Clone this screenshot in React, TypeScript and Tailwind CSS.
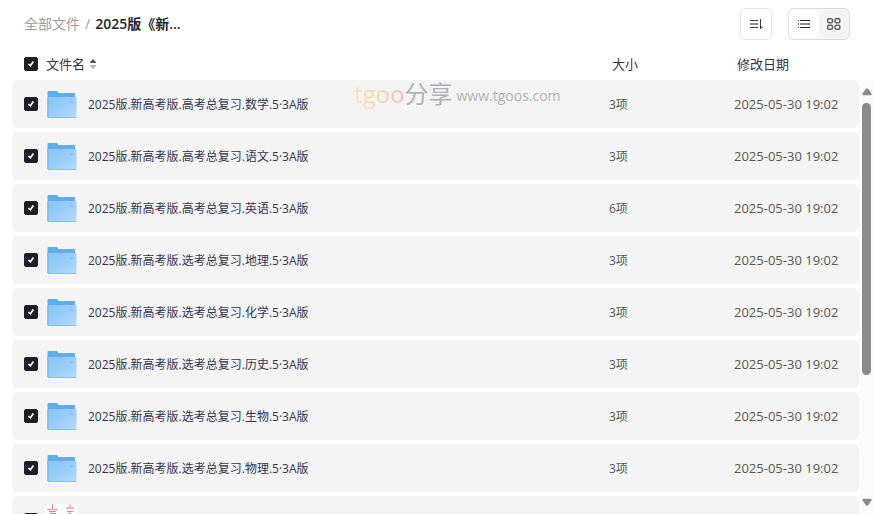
import { useState } from 'react';

const files = [
  { name: '2025版.新高考版.高考总复习.数学.5·3A版', size: '3项', date: '2025-05-30 19:02' },
  { name: '2025版.新高考版.高考总复习.语文.5·3A版', size: '3项', date: '2025-05-30 19:02' },
  { name: '2025版.新高考版.高考总复习.英语.5·3A版', size: '6项', date: '2025-05-30 19:02' },
  { name: '2025版.新高考版.选考总复习.地理.5·3A版', size: '3项', date: '2025-05-30 19:02' },
  { name: '2025版.新高考版.选考总复习.化学.5·3A版', size: '3项', date: '2025-05-30 19:02' },
  { name: '2025版.新高考版.选考总复习.历史.5·3A版', size: '3项', date: '2025-05-30 19:02' },
  { name: '2025版.新高考版.选考总复习.生物.5·3A版', size: '3项', date: '2025-05-30 19:02' },
  { name: '2025版.新高考版.选考总复习.物理.5·3A版', size: '3项', date: '2025-05-30 19:02' },
];

function Checkbox({ label, checked, onChange }: { label: string; checked: boolean; onChange: () => void }) {
  return (
    <label className="grid w-3.5 shrink-0 cursor-pointer">
      <input
        type="checkbox"
        aria-label={label}
        checked={checked}
        onChange={onChange}
        className="peer col-start-1 row-start-1 size-3.5 appearance-none rounded-xs border border-gray-400 bg-white checked:border-[#1e1f26] checked:bg-[#1e1f26]"
      />
      <svg viewBox="0 0 14 14" className="pointer-events-none invisible col-start-1 row-start-1 size-3.5 peer-checked:visible" fill="none" stroke="#fff" strokeWidth="1.7">
        <path d="M4.500 7 6.400 8.800 9.400 4.600" />
      </svg>
    </label>
  );
}

function FolderIcon() {
  return (
    <svg viewBox="0 0 32 32" className="size-8 shrink-0">
      <defs>
        <linearGradient id="folder" x1="0" y1="0" x2="1" y2="1">
          <stop offset="0" stopColor="#86c3f6" />
          <stop offset=".5" stopColor="#9bcef9" />
          <stop offset="1" stopColor="#b4dcfc" />
        </linearGradient>
      </defs>
      <path d="M1.500 4.200Q1.500 3 2.700 3H10.300Q11 3 11.500 3.600L12.600 4.900H28Q29 4.900 29 6V29H1.500Z" fill="#5fade9" />
      <path d="M2 9H29.800Q30.500 9 30.500 9.700V29Q30.500 30 29.500 30H2.500Q1.500 30 1.500 29V9.500Q1.500 9 2 9Z" fill="url(#folder)" />
      <path d="M23.500 14h3.500" stroke="#7dbbf0" strokeWidth="1.500" />
      <path d="M2 29.500h28" stroke="#7cbff5" strokeWidth="1" />
      <path d="M2 9v20" stroke="#74b8f0" strokeWidth="1" />
    </svg>
  );
}

export default function App() {
  const [selected, setSelected] = useState<boolean[]>(Array(files.length + 1).fill(true));
  const [view, setView] = useState<'list' | 'grid'>('list');

  const allSelected = selected.every(Boolean);
  const toggle = (index: number) => setSelected(s => s.map((v, i) => (i === index ? !v : v)));
  const toggleAll = () => setSelected(s => s.map(() => !allSelected));

  return (
    <div className="relative flex h-screen flex-col overflow-hidden bg-white font-['Open_Sans','Noto_Sans_CJK_SC',sans-serif] text-[#33334f]">
      {/* Toolbar */}
      <header className="flex h-12 shrink-0 items-center justify-between px-6">
        <nav className="flex items-center gap-[5px] text-sm">
          <a href="#all" className="text-[#9b9ca3]">全部文件</a>
          <span className="text-[#9b9ca3]">/</span>
          <span className="font-semibold text-[#25262e]">2025版《新...</span>
        </nav>
        <div className="flex gap-4">
          <button aria-label="排序" className="flex size-8 items-center justify-center rounded-md border border-[#e6e6e8]">
            <svg viewBox="0 0 16 16" className="size-4" fill="none" stroke="#3a3b40">
              <path d="M2 4.500h8M2 11.500h8M12.500 3v10" />
              <path d="M2 8h8" stroke="#8d8d90" strokeWidth="2" />
              <path d="M12 13v-3l3 1z" fill="#3a3b40" stroke="none" />
            </svg>
          </button>
          <div className="flex h-8 overflow-hidden rounded-md border border-[#dcdcde] bg-[#f4f4f4]">
            <button aria-label="列表" onClick={() => setView('list')} className={`flex w-[30px] items-center justify-center rounded-md ${view === 'list' ? 'bg-white' : ''}`}>
              <svg viewBox="0 0 16 16" className="size-4" stroke="#1e1f26">
                <path d="M4 4.500h10M4 11.500h10M2 4.500h1M2 11.500h1" />
                <path d="M4 8h10M2 8h1" stroke="#8d8d90" strokeWidth="2" />
              </svg>
            </button>
            <button aria-label="网格" onClick={() => setView('grid')} className={`flex w-[30px] items-center justify-center rounded-md ${view === 'grid' ? 'bg-white' : ''}`}>
              <svg viewBox="0 0 16 16" className="size-4" fill="none" stroke="#626266" strokeWidth="1.500">
                <rect x="1.700" y="2.700" width="4.800" height="4" rx="1.200" />
                <rect x="9" y="2.700" width="4.800" height="4" rx="1.200" />
                <rect x="1.700" y="9.200" width="4.800" height="4" rx="1.200" />
                <rect x="9" y="9.200" width="4.800" height="4" rx="1.200" />
              </svg>
            </button>
          </div>
        </div>
      </header>

      <main className="flex min-h-0 flex-1">
        {/* File list */}
        <div className="min-w-0 flex-1 overflow-hidden pl-3">
          <table className="w-full table-fixed border-separate border-spacing-x-0 border-spacing-y-1 text-left">
            <colgroup>
              <col />
              <col className="w-[125px]" />
              <col className="w-[125px]" />
            </colgroup>
            <thead>
              <tr className="h-6 text-[13px] leading-5">
                <th className="p-0 pl-3 font-normal">
                  <div className="flex items-center gap-2">
                    <Checkbox label="全选" checked={allSelected} onChange={toggleAll} />
                    <button className="flex items-center gap-1">
                      文件名
                      <svg viewBox="0 0 8 12" className="h-3 w-2">
                        <path d="M1 5Q.8 4.500 1.200 4L3 1.800Q4 .8 5 1.800L6.800 4Q7.200 4.500 7 5Z" fill="#55565c" />
                        <path d="M1 7Q.8 7.500 1.200 8L3 10.200Q4 11.200 5 10.200L6.800 8Q7.200 7.500 7 7Z" fill="#b5b5b8" />
                      </svg>
                    </button>
                  </div>
                </th>
                <th className="p-0 pl-[3px] font-normal">大小</th>
                <th className="p-0 pl-[3px] font-normal">修改日期</th>
              </tr>
            </thead>
            <tbody>
              {files.map((file, i) => (
                <tr key={file.name} className="h-12">
                  <td className="rounded-l-md bg-[#f4f4f4] p-0 pl-3">
                    <div className="flex items-center gap-2">
                      <Checkbox label={file.name} checked={selected[i]} onChange={() => toggle(i)} />
                      <FolderIcon />
                      <span className="truncate pt-0.5 pl-0.5 text-xs">{file.name}</span>
                    </div>
                  </td>
                  <td className="bg-[#f4f4f4] p-0 pt-0.5 text-xs text-[#5a5550]">{file.size}</td>
                  <td className="rounded-r-md bg-[#f4f4f4] p-0 pt-0.5 text-[13px] whitespace-nowrap text-[#5a5550]">{file.date}</td>
                </tr>
              ))}
              <tr className="h-12">
                <td className="rounded-l-md bg-[#f4f4f4] p-0 pl-3">
                  <div className="flex items-center gap-2">
                    <Checkbox label="图片" checked={selected[files.length]} onChange={() => toggle(files.length)} />
                    <svg viewBox="0 0 32 32" className="size-8 shrink-0">
                      <rect width="32" height="32" fill="#fff" />
                      <g fill="none" stroke="#d88986">
                        <path d="M6.500 0v5M3 7.500h7M4 9.500h6M24 0v3M21 7.500h6M22 9.500h3" />
                        <path d="M1 5.500h11M20 4h8" strokeWidth="1.500" stroke="#e3a5a2" />
                      </g>
                    </svg>
                  </div>
                </td>
                <td className="bg-[#f4f4f4] p-0" />
                <td className="rounded-r-md bg-[#f4f4f4] p-0" />
              </tr>
            </tbody>
          </table>
        </div>

        {/* Scroll rail */}
        <div className="mt-8 flex w-[15px] shrink-0 flex-col items-center gap-[7px] bg-[#fcfcfc] py-2">
          <svg viewBox="0 0 10 8" className="h-2 w-2.5 shrink-0" fill="#8b8b8b">
            <path d="M3.800 .8Q5 -.2 6.200 .8L9.500 5.500Q10 7.200 8.800 7.200H1.200Q0 7.200 .5 5.500Z" />
          </svg>
          <div className="min-h-0 w-full flex-1">
            <div className="mx-auto h-[70%] w-[9px] rounded-full bg-[#8b8b8b]" />
          </div>
          <svg viewBox="0 0 10 8" className="h-2 w-2.5 shrink-0" fill="#8b8b8b">
            <path d="M3.800 7.200Q5 8.200 6.200 7.200L9.500 2.500Q10 .8 8.800 .8H1.200Q0 .8 .5 2.500Z" />
          </svg>
        </div>
      </main>

      {/* Watermark */}
      <div className="pointer-events-none absolute top-[78px] left-[354px] flex items-center whitespace-nowrap text-[#b2b2b6]">
        <span className="bg-linear-to-r from-[#f8e8a4] via-[#fad3b0] to-[#f7b8bc] bg-clip-text text-2xl leading-8 text-transparent">tgoo</span>
        <span className="text-2xl leading-8">分享</span>
        <span className="pt-1 pl-1 text-sm">www.tgoos.com</span>
      </div>
    </div>
  );
}
